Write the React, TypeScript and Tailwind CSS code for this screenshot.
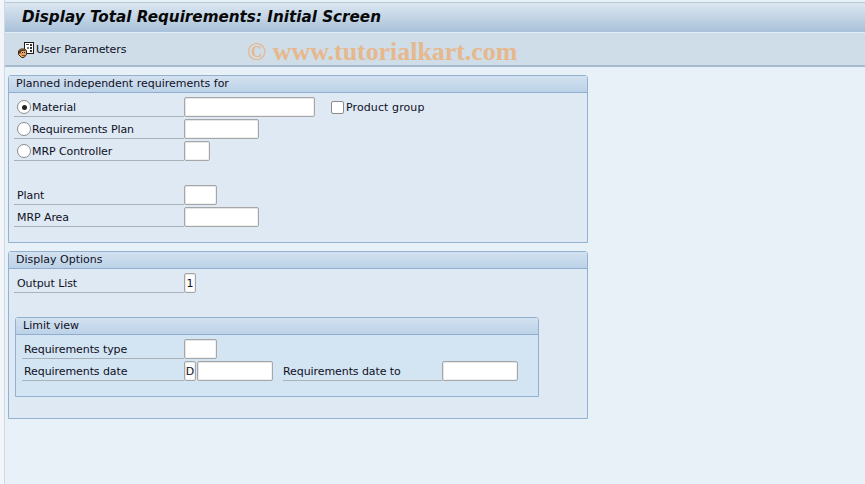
// SAP GUI selection screen: Display Total Requirements
import type { ReactNode } from 'react'

const FONT = "font-['DejaVu_Sans',sans-serif] text-[11px]"

function Field({ w, value }: { w: string; value?: string }) {
  return (
    <div className={`${w} flex h-5 shrink-0 items-center justify-center rounded-[2px] border border-[#a6a6a6] bg-white pt-[1px] leading-none text-[#10101e] shadow-[inset_1px_1px_0_#e6e6e6,inset_-1px_-1px_0_#f0f0f0]`}>
      {value}
    </div>
  )
}

function Label({ w, children, pl = 'pl-[3px]' }: { w: string; children?: ReactNode; pl?: string }) {
  return (
    <div className={`${w} ${pl} flex h-5 shrink-0 items-center border-b border-[#a9b1b9] pt-[3px] tracking-[-0.08px] text-[#10101e]`}>
      {children}
    </div>
  )
}

function Radio({ on }: { on?: boolean }) {
  return (
    <span className="mr-[1px] -mt-[2px] flex h-[14px] w-[14px] shrink-0 items-center justify-center rounded-full border border-[#8c8c8c] bg-white">
      {on && <span className="h-[5px] w-[5px] rounded-full bg-[#222]" />}
    </span>
  )
}

function Row({ children }: { children: ReactNode }) {
  return <div className="flex h-5 items-start">{children}</div>
}

function Panel({ title, className, children }: { title: string; className: string; children: ReactNode }) {
  return (
    <section className={`${className} rounded-tr-[3px] rounded-tl-[3px] border border-[#92b0d0]`}>
      <h2 className="flex h-[17px] items-center border-b border-[#8fadcf] bg-gradient-to-b from-[#d3e1ef] to-[#bcd2e8] pl-[7px] font-normal text-[#10101e]">
        {title}
      </h2>
      {children}
    </section>
  )
}

function UserParamsIcon() {
  return (
    <svg width="16" height="16" viewBox="0 0 16 16" className="shrink-0">
      <rect x="6.500" y="0.500" width="9" height="11" fill="#fff" stroke="#1c1c1c" />
      <rect x="8" y="2" width="3" height="1" fill="#444" />
      <rect x="12" y="2" width="2" height="2" fill="#333" />
      <rect x="12" y="5" width="2" height="2" fill="#333" />
      <rect x="9" y="5" width="2" height="2" fill="#777" />
      <rect x="12" y="8" width="2" height="2" fill="#333" />
      <path d="M0.500 9 2.500 7h4L8.500 8.500v4L6 15.500H3.500L0.500 12.500z" fill="#e3a467" stroke="#3a2a1a" />
      <path d="M1 9 3 7.500h4.500V9H3.500L2.500 11.500H1z" fill="#5a3a1a" />
      <rect x="4" y="10" width="1" height="1" fill="#222" />
      <rect x="6" y="10" width="1" height="1" fill="#222" />
      <rect x="4" y="13" width="3" height="1" fill="#8a4a20" />
    </svg>
  )
}

export default function App() {
  return (
    <div className={`${FONT} flex h-[484px] w-[865px] overflow-hidden bg-[#e8f0f8]`}>
      <div className="w-[4px] shrink-0 bg-[#f2f5f9]" />
      <div className="relative flex min-w-0 flex-1 flex-col border-l border-[#d0d8e2]">
        <header className="mt-[2px] flex h-[31px] shrink-0 items-center border-y border-[#b8c8d8] border-b-[#e4ecf4] bg-gradient-to-b from-[#dce7f1] to-[#a9c1d9] pl-[17px]">
          <h1 className="text-[15.2px] font-bold italic text-[#080808]">
            Display Total Requirements: Initial Screen
          </h1>
        </header>
        <div className="flex h-[34px] shrink-0 items-center border-b-2 border-[#a6bbd0] bg-[#cfdde9] pl-[13px] pt-[1px] text-[#10101e]">
          <UserParamsIcon />
          <span className="ml-[2px] mt-[2px] tracking-[-0.08px]">User Parameters</span>
          <span className="absolute left-[242px] top-[32px] font-['Liberation_Serif',serif] text-[26px] font-bold tracking-[-0.05px] text-[#e6b88c]">
            © www.tutorialkart.com
          </span>
        </div>

        <main className="flex flex-col pl-[3px] pt-[8px]">
          <Panel title="Planned independent requirements for" className="h-[168px] w-[580px] bg-[#dee9f4]">
            <div className="flex flex-col gap-[2px] pl-[5px] pt-[4px]">
              <Row>
                <Label w="w-[170px]">
                  <Radio on />
                  Material
                </Label>
                <Field w="w-[131px]" />
                <div className="ml-[16px] flex h-5 items-center pt-[3px] tracking-[0.1px] text-[#10101e]">
                  <span className="mr-[2px] -mt-[3px] h-[13px] w-[13px] rounded-[2px] border border-[#8c8c8c] bg-white" />
                  Product group
                </div>
              </Row>
              <Row>
                <Label w="w-[170px]">
                  <Radio />
                  Requirements Plan
                </Label>
                <Field w="w-[75px]" />
              </Row>
              <Row>
                <Label w="w-[170px]">
                  <Radio />
                  MRP Controller
                </Label>
                <Field w="w-[26px]" />
              </Row>
              <div className="h-5" />
              <Row>
                <Label w="w-[170px]">Plant</Label>
                <Field w="w-[33px]" />
              </Row>
              <Row>
                <Label w="w-[170px]">MRP Area</Label>
                <Field w="w-[75px]" />
              </Row>
            </div>
          </Panel>

          <Panel title="Display Options" className="mt-[8px] h-[168px] w-[580px] bg-[#dee9f4]">
            <div className="pl-[5px] pt-[4px]">
              <Row>
                <Label w="w-[170px]">Output List</Label>
                <Field w="w-[12px]" value="1" />
              </Row>
            </div>
            <div className="pl-[6px] pt-[24px]">
              <Panel title="Limit view" className="h-[80px] w-[524px] bg-[#d3e4f2]">
                <div className="flex flex-col gap-[2px] pl-[6px] pt-[4px]">
                  <Row>
                    <Label w="w-[162px]" pl="pl-[2px]">Requirements type</Label>
                    <Field w="w-[33px]" />
                  </Row>
                  <Row>
                    <Label w="w-[162px]" pl="pl-[2px]">Requirements date</Label>
                    <Field w="w-[12px]" value="D" />
                    <div className="ml-[1px]">
                      <Field w="w-[76px]" />
                    </div>
                    <div className="ml-[10px]">
                      <Label w="w-[159px]" pl="pl-0">Requirements date to</Label>
                    </div>
                    <Field w="w-[76px]" />
                  </Row>
                </div>
              </Panel>
            </div>
          </Panel>
        </main>
      </div>
    </div>
  )
}
